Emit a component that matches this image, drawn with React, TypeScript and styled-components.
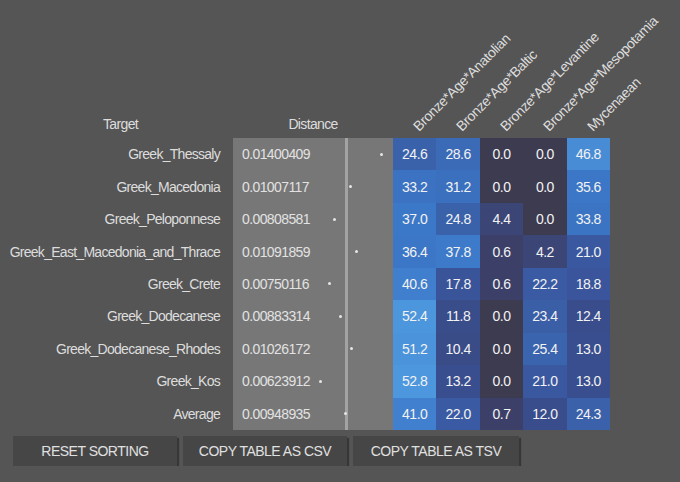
import React from "react";
import styled, { createGlobalStyle } from "styled-components";

const GlobalStyle = createGlobalStyle`
  body {
    margin: 8px;
    background: #555555;
    font-family: "Liberation Sans", Arial, sans-serif;
    font-size: 14px;
    letter-spacing: -0.65px;
    color: #dddddd;
  }
`;

const Table = styled.table`
  table-layout: fixed;
  border-collapse: collapse;
  width: 602px;
  td,
  th {
    padding: 0;
  }
`;

const HeadCell = styled.th`
  height: 124px;
  vertical-align: bottom;
  padding-bottom: 6px !important;
  font-weight: normal;
  text-align: center;
  line-height: 15px;
`;

const RotLabel = styled.span`
  display: block;
  width: max-content;
  margin-left: 28px;
  margin-bottom: -2px;
  white-space: nowrap;
  letter-spacing: -0.4px;
  transform-origin: 0 100%;
  transform: rotate(-45deg);
`;

const Row = styled.tr`
  height: 32.44px;
`;

const NameCell = styled.td`
  text-align: right;
  padding-right: 13px !important;
  white-space: nowrap;
  letter-spacing: -0.72px;
`;

const DistCell = styled.td`
  position: relative;
  background: #777777;
  height: 32.44px;
`;

const DistInner = styled.div`
  display: grid;
  grid-template-columns: 112px 3px 1fr;
  height: 100%;
  align-items: center;
`;

const DistValue = styled.span`
  padding-left: 9px;
  color: #e2e2e2;
  letter-spacing: -0.6px;
`;

const Divider = styled.span`
  align-self: stretch;
  background: #a3a3a3;
`;

const Dot = styled.span`
  position: absolute;
  top: 50%;
  width: 3px;
  height: 3px;
  margin-top: -1.5px;
  border-radius: 50%;
  background: #e6e6e6;
`;

const ValueCell = styled.td<{ $bg: string }>`
  background: ${(p) => p.$bg};
  text-align: center;
  color: #f2f2f2;
  letter-spacing: -0.5px;
`;

const ButtonBar = styled.div`
  display: flex;
  gap: 6px;
  margin-top: 6px;
  padding-left: 5px;
`;

const Button = styled.button<{ $w: number }>`
  width: ${(p) => p.$w}px;
  height: 30px;
  border: none;
  background: #464646;
  color: #e0e0e0;
  font-family: "Liberation Sans", Arial, sans-serif;
  font-size: 14px;
  letter-spacing: -0.5px;
  text-transform: uppercase;
  box-shadow: 2px 2px 1px rgba(0, 0, 0, 0.35);
  cursor: pointer;
`;

const columns = [
  "Bronze*Age*Anatolian",
  "Bronze*Age*Baltic",
  "Bronze*Age*Levantine",
  "Bronze*Age*Mesopotamia",
  "Mycenaean",
];

const rows: Array<{ name: string; dist: number; vals: number[] }> = [
  { name: "Greek_Thessaly", dist: 0.01400409, vals: [24.6, 28.6, 0.0, 0.0, 46.8] },
  { name: "Greek_Macedonia", dist: 0.01007117, vals: [33.2, 31.2, 0.0, 0.0, 35.6] },
  { name: "Greek_Peloponnese", dist: 0.00808581, vals: [37.0, 24.8, 4.4, 0.0, 33.8] },
  { name: "Greek_East_Macedonia_and_Thrace", dist: 0.01091859, vals: [36.4, 37.8, 0.6, 4.2, 21.0] },
  { name: "Greek_Crete", dist: 0.00750116, vals: [40.6, 17.8, 0.6, 22.2, 18.8] },
  { name: "Greek_Dodecanese", dist: 0.00883314, vals: [52.4, 11.8, 0.0, 23.4, 12.4] },
  { name: "Greek_Dodecanese_Rhodes", dist: 0.01026172, vals: [51.2, 10.4, 0.0, 25.4, 13.0] },
  { name: "Greek_Kos", dist: 0.00623912, vals: [52.8, 13.2, 0.0, 21.0, 13.0] },
  { name: "Average", dist: 0.00948935, vals: [41.0, 22.0, 0.7, 12.0, 24.3] },
];

// colour stops picked from the heat map
const stops: Array<[number, number[]]> = [
  [0, [61, 59, 80]],
  [0.6, [60, 64, 104]],
  [4.3, [59, 70, 119]],
  [12, [57, 77, 140]],
  [21, [58, 88, 160]],
  [25, [58, 99, 172]],
  [31, [59, 112, 191]],
  [37, [60, 120, 200]],
  [47, [72, 140, 214]],
  [53, [76, 151, 222]],
];

const heat = (v: number) => {
  for (let i = 1; i < stops.length; i++) {
    const [v1, c1] = stops[i];
    const [v0, c0] = stops[i - 1];
    if (v <= v1 || i === stops.length - 1) {
      const t = Math.min(1, Math.max(0, (v - v0) / (v1 - v0)));
      const c = c0.map((x, k) => Math.round(x + (c1[k] - x) * t));
      return `rgb(${c.join(",")})`;
    }
  }
  return "#3d3b50";
};

const dotLeft = (d: number) => 87 + (d - 0.00623912) * 7856 - 1.5;

const App = () => {
  return (
    <>
      <GlobalStyle />
      <Table>
        <colgroup>
          <col style={{ width: 225 }} />
          <col style={{ width: 160 }} />
          {columns.map((c) => (
            <col key={c} style={{ width: 43.4 }} />
          ))}
        </colgroup>
        <thead>
          <tr>
            <HeadCell>Target</HeadCell>
            <HeadCell>Distance</HeadCell>
            {columns.map((c) => (
              <HeadCell key={c}>
                <RotLabel>{c}</RotLabel>
              </HeadCell>
            ))}
          </tr>
        </thead>
        <tbody>
          {rows.map((r) => (
            <Row key={r.name}>
              <NameCell>{r.name}</NameCell>
              <DistCell>
                <DistInner>
                  <DistValue>{r.dist.toFixed(8)}</DistValue>
                  <Divider />
                  <span />
                </DistInner>
                <Dot style={{ left: dotLeft(r.dist) }} />
              </DistCell>
              {r.vals.map((v, i) => (
                <ValueCell key={i} $bg={heat(v)}>
                  {v.toFixed(1)}
                </ValueCell>
              ))}
            </Row>
          ))}
        </tbody>
      </Table>
      <ButtonBar>
        <Button $w={164}>Reset sorting</Button>
        <Button $w={164}>Copy table as CSV</Button>
        <Button $w={166}>Copy table as TSV</Button>
      </ButtonBar>
    </>
  );
};

export default App;
